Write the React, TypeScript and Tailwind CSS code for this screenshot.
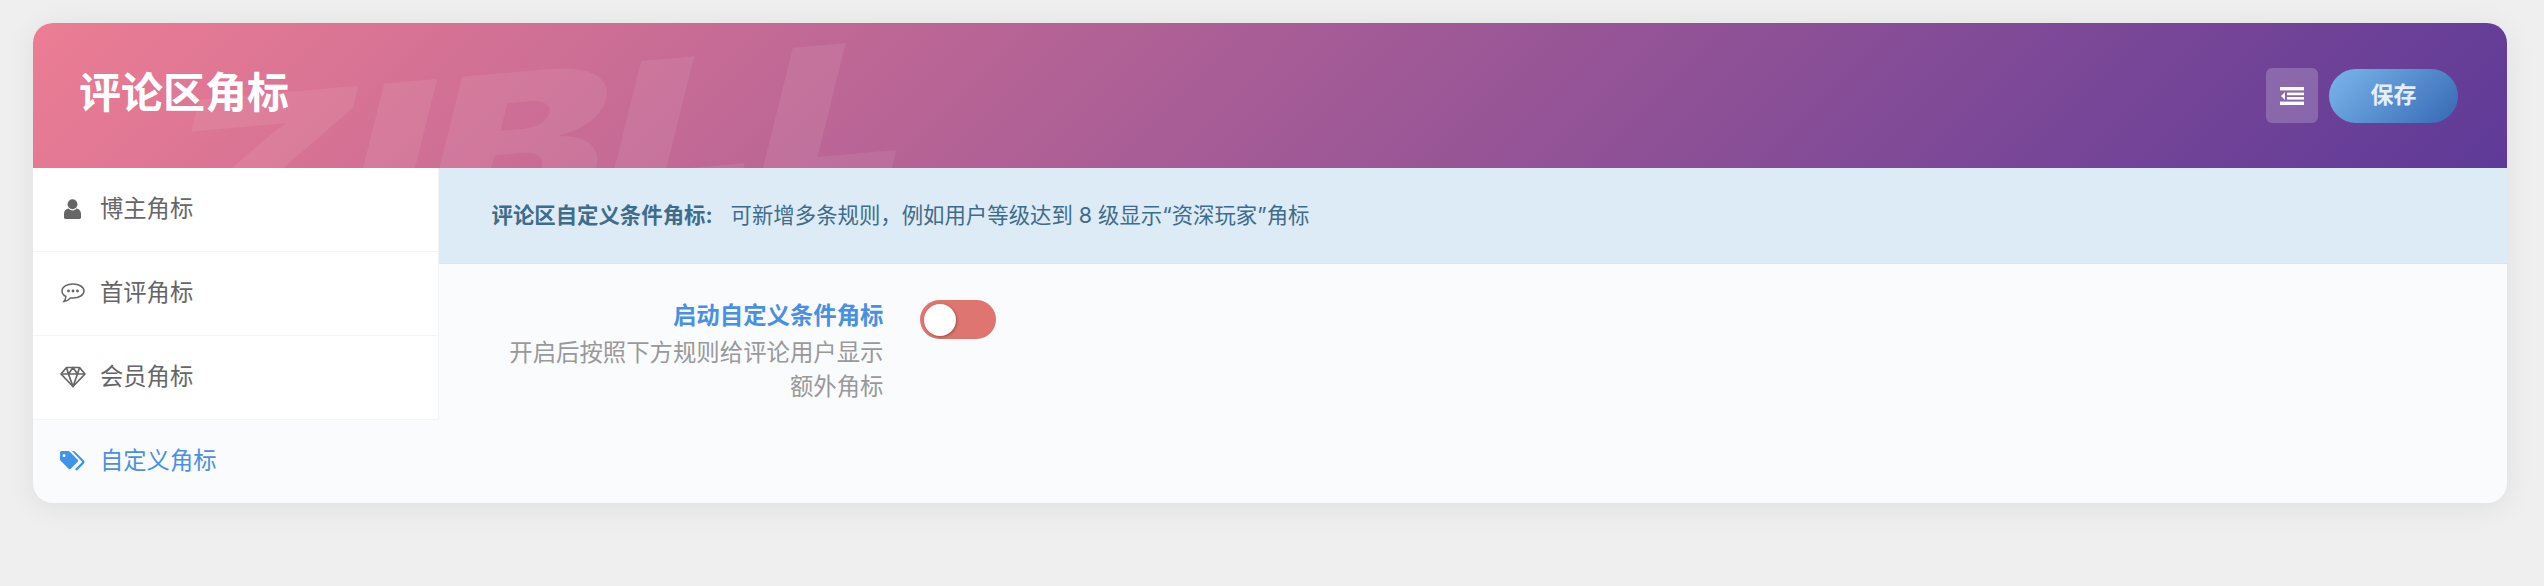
import React from "react";

const font = { fontFamily: '"Inter", "Noto Sans CJK SC", sans-serif' };

function UserIcon() {
  return (
    <svg width="17" height="20" viewBox="0 0 18 21" fill="#666">
      <circle cx="9" cy="5.500" r="5.200" />
      <path d="M1.500 21C.6 21 0 20.400 0 19.500V15.500c0-3 2-5 4.800-5.500 1 1.300 2.500 2 4.200 2s3.200-.7 4.200-2c2.800.5 4.800 2.500 4.800 5.500v4c0 .9-.6 1.500-1.500 1.500z" />
    </svg>
  );
}
function ChatIcon() {
  return (
    <svg width="24" height="20" viewBox="0 0 24 20" fill="none" stroke="#666" strokeWidth="1.500">
      <path d="M12 1C5.900 1 1 3.900 1 8c0 2.300 1.500 4.200 3.900 5.500-.1 1.700-.9 3.400-2 5 2.500-.4 5-1.800 6.500-3.600.9.100 1.700.100 2.600.100 6.100 0 11-3 11-7S18.100 1 12 1z" />
      <g fill="#666" stroke="none">
        <circle cx="7.500" cy="8" r="1.400" />
        <circle cx="12" cy="8" r="1.400" />
        <circle cx="16.500" cy="8" r="1.400" />
      </g>
    </svg>
  );
}
function GemIcon() {
  return (
    <svg width="26" height="22" viewBox="0 0 26 22" fill="none" stroke="#666" strokeWidth="1.700" strokeLinejoin="round">
      <path d="M6.500 1.500h13L25 8 13 20.500 1 8z" />
      <path d="M1 8h24M8.500 8l4.500 12.500L17.500 8l-4.500-6.500zM6.500 1.500 8.500 8M19.500 1.500 17.500 8" />
    </svg>
  );
}
function TagsIcon() {
  return (
    <svg width="25" height="20" viewBox="0 0 25 20" fill="#3f94e9">
      <path
        fillRule="evenodd"
        d="M0 1.800C0 .8.800 0 1.800 0h6.400c.5 0 1 .2 1.300.5l8 8c.7.700.7 1.900 0 2.600l-6.500 6.500c-.7.700-1.900.7-2.600 0l-8-8C.2 9.300 0 8.800 0 8.300zM4 3a1.500 1.500 0 1 0 0 3 1.500 1.500 0 0 0 0-3z"
      />
      <path d="M12 0h1.500c.5 0 1 .2 1.300.5l8.900 8.800c1 1 1 2.500 0 3.500l-6.200 6.200c-.5.500-1.300.5-1.800 0-.4-.4-.4-1.100 0-1.500l6-6.100c.3-.3.3-.8 0-1.100L12 0z" />
    </svg>
  );
}
function IndentIcon() {
  return (
    <svg width="24" height="18" viewBox="0 0 24 18" fill="#fff">
      <rect x="0" y="0" width="24" height="3.400" />
      <rect x="7" y="5.600" width="17" height="2.600" />
      <rect x="7" y="10" width="17" height="2.600" />
      <rect x="0" y="14.600" width="24" height="3.400" />
      <path d="M5 5v8L1 9z" />
    </svg>
  );
}

function NavItem({ icon, label, active, last }: { icon: React.ReactNode; label: string; active?: boolean; last?: boolean }) {
  return (
    <div
      className={
        "flex items-center pb-[1px] text-[23.300px] " +
        (last ? "h-[83px] " : "h-[84px] ") +
        (active ? "text-[#4a90e2]" : "border-r border-b border-[#f3f4f6] bg-white text-[#666]")
      }
    >
      <div className="mr-[7px] ml-[19px] flex w-[41px] shrink-0 items-center justify-center">{icon}</div>
      <span>{label}</span>
    </div>
  );
}

export default function App() {
  return (
    <div className="min-h-[586px] bg-[#efefef] pt-[23px] pr-[37px] pb-[83px] pl-[33px]" style={font}>
      <div className="overflow-hidden rounded-[20px] bg-[#f9fbfd] shadow-[0_4px_30px_rgba(0,0,0,0.07)]">
        <header className="relative flex h-[145px] items-center justify-between overflow-hidden bg-[linear-gradient(135deg,#ec7d94_0%,#5e3a98_100%)] pr-[49px] pl-[46px]">
          <div
            className="pointer-events-none absolute top-[21px] left-[236px] scale-x-[1.38] -rotate-[5deg] -skew-x-[14deg] text-[195px] leading-none font-black text-white/[0.07]"
            style={{ fontFamily: '"Inter", sans-serif' }}
          >
            ZIBLL
          </div>
          <h1 className="relative pb-[7px] text-[42px] font-bold text-white">评论区角标</h1>
          <div className="relative flex items-center gap-[11px]">
            <button className="flex h-[55px] w-[52px] items-center justify-center rounded-[6px] bg-white/20">
              <IndentIcon />
            </button>
            <button className="h-[54px] w-[129px] rounded-full bg-[linear-gradient(135deg,#7cb6ec,#3569b4)] text-[23px] font-semibold text-[#e6eefa]">
              保存
            </button>
          </div>
        </header>
        <div className="flex">
          <nav className="w-[405.500px] shrink-0">
            <NavItem icon={<UserIcon />} label="博主角标" />
            <NavItem icon={<ChatIcon />} label="首评角标" />
            <NavItem icon={<GemIcon />} label="会员角标" />
            <NavItem icon={<TagsIcon />} label="自定义角标" active last />
          </nav>
          <main className="min-w-0 flex-1">
            <div className="flex h-[96px] items-center border-b border-[#d3e6f0] bg-[#ddebf6] pl-[53px] text-[21.400px] text-[#3f6c8b]">
              <strong className="font-bold">评论区自定义条件角标:</strong>
              <span className="ml-[18px]">可新增多条规则，例如用户等级达到 8 级显示“资深玩家”角标</span>
            </div>
            <div className="flex pt-[34px]">
              <div className="w-[445px] shrink-0 pl-[60px] text-right text-[23.400px]">
                <div className="leading-[36px] font-bold text-[#4a90e2]">启动自定义条件角标</div>
                <div className="mt-[2px] leading-[34px] text-[#999]">开启后按照下方规则给评论用户显示额外角标</div>
              </div>
              <div className="mt-[2px] ml-[36px] flex h-[39px] w-[76px] items-center rounded-full bg-[#df7571] pl-[4px]">
                <div className="h-[32px] w-[32px] rounded-full bg-white shadow-[1px_1px_3px_rgba(0,0,0,0.3)]" />
              </div>
            </div>
          </main>
        </div>
      </div>
    </div>
  );
}
